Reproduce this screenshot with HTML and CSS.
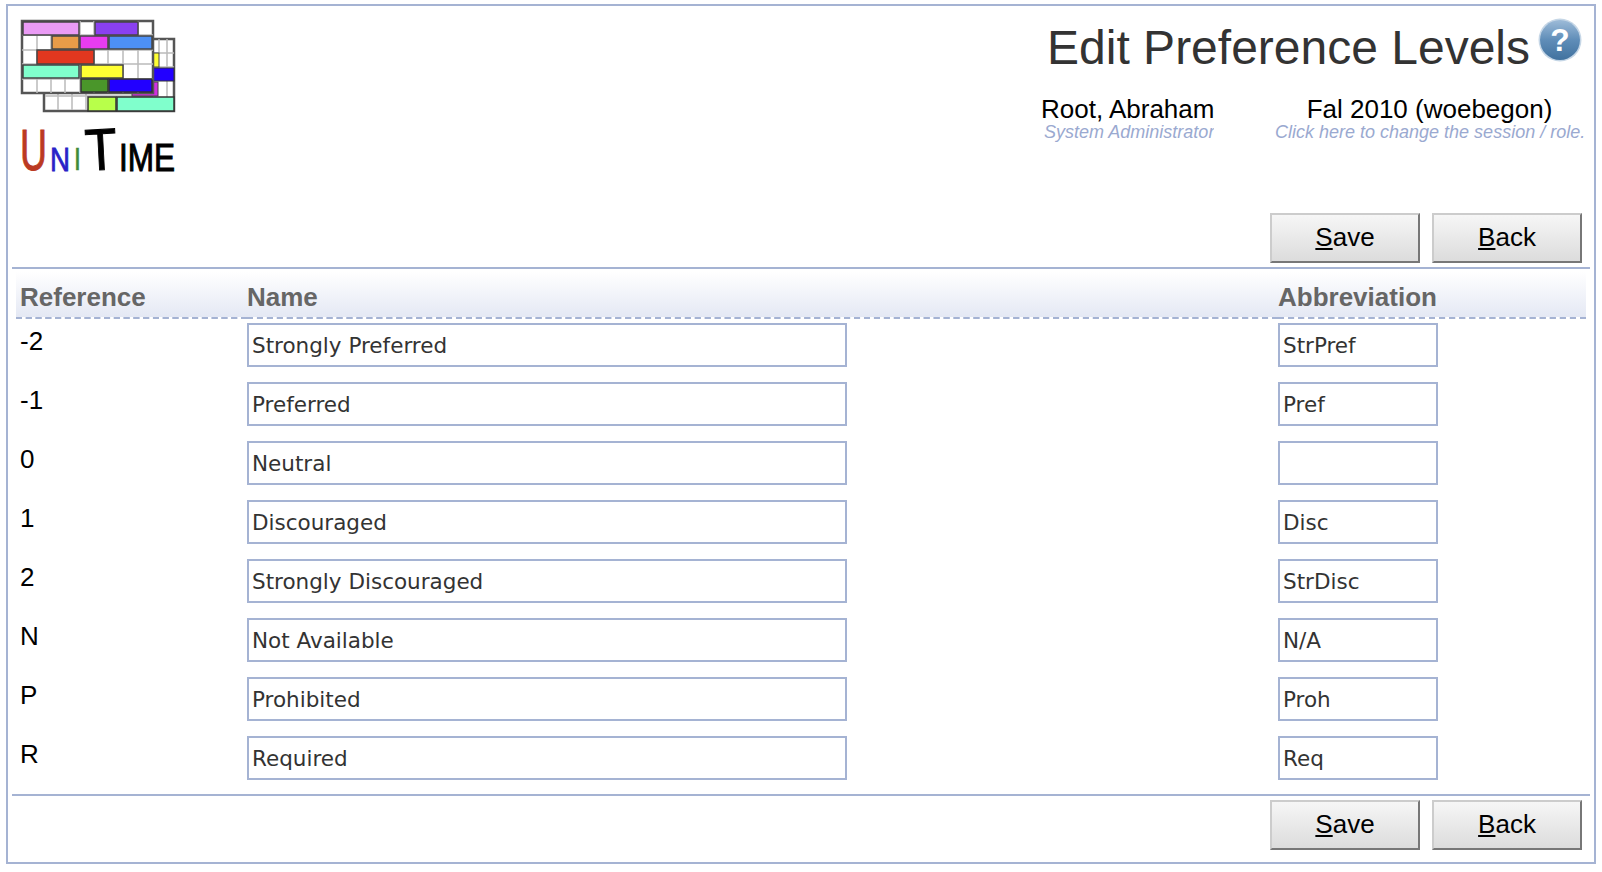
FILE: index.html
```html
<!DOCTYPE html>
<html lang="en">
<head>
<meta charset="utf-8">
<title>Edit Preference Levels</title>
<link rel="stylesheet" href="styles.css">
</head>
<body>
<div class="frame">
  <header class="top">
    <svg class="logo" width="160" height="165" viewBox="18 18 160 165" aria-label="UniTime">
      <g class="grid-back">
        <rect x="44" y="39" width="130" height="72" fill="#fff" stroke="#555" stroke-width="2.5"/>
        <path d="M58 94v16M72 94v16M86 94v16M159 39v14M167 39v58M153 53h21M153 67h21M153 96h-108" stroke="#bbb" stroke-width="1.5" fill="none"/>
        <rect x="153" y="53" width="6" height="14" fill="#ffff33" stroke="#444"/>
        <rect x="153" y="68" width="21" height="13" fill="#2200ff" stroke="#333"/>
        <rect x="132" y="82" width="26" height="14" fill="#d030e0" stroke="#444"/>
        <rect x="88" y="97" width="28" height="14" fill="#b8ff4a" stroke="#333" stroke-width="1.5"/>
        <rect x="117" y="97" width="57" height="14" fill="#80ffcc" stroke="#333" stroke-width="1.5"/>
      </g>
      <g class="grid-main">
        <rect x="22" y="21" width="131" height="72" fill="#fff" stroke="#555" stroke-width="2.5"/>
        <path d="M22 35h131M22 50h131M22 64h131M22 79h131M37 35v58M51 35v58M65 35v58M80 21v72M94 21v72M108 35v58M123 50v43M138 21v72" stroke="#bbb" stroke-width="1.5" fill="none"/>
        <rect x="23" y="22" width="56" height="13" fill="#ea9bf5" stroke="#444" stroke-width="1.5"/>
        <rect x="95" y="22" width="43" height="13" fill="#8a40f0" stroke="#444" stroke-width="1.5"/>
        <rect x="52" y="36" width="27" height="13" fill="#e89c48" stroke="#444" stroke-width="1.5"/>
        <rect x="80" y="36" width="28" height="13" fill="#e83cf0" stroke="#444" stroke-width="1.5"/>
        <rect x="109" y="36" width="43" height="13" fill="#4d90f5" stroke="#444" stroke-width="1.5"/>
        <rect x="37" y="50" width="57" height="14" fill="#e2371f" stroke="#444" stroke-width="1.5"/>
        <rect x="23" y="65" width="56" height="13" fill="#80ffcc" stroke="#444" stroke-width="1.5"/>
        <rect x="81" y="65" width="42" height="13" fill="#ffff33" stroke="#444" stroke-width="1.5"/>
        <rect x="81" y="79" width="27" height="13" fill="#4a962a" stroke="#333" stroke-width="1.5"/>
        <rect x="109" y="79" width="43" height="13" fill="#2200ff" stroke="#333" stroke-width="1.5"/>
      </g>
      <text class="lg lg-u" transform="translate(20 170) scale(.645 1)">U</text>
      <text class="lg lg-n" transform="translate(50 171) scale(.84 1)">N</text>
      <text class="lg lg-i" transform="translate(74 170) scale(.8 1)">I</text>
      <text class="lg lg-t" transform="rotate(-3 100 150) translate(85 170) scale(.89 1)">T</text>
      <text class="lg lg-ime" transform="translate(119 171) scale(.83 1)">IME</text>
    </svg>
    <div class="head-right">
      <div class="title-row">
        <h1 class="title">Edit Preference Levels</h1>
        <svg class="help" width="44" height="44" viewBox="0 0 43 43" aria-label="Help">
          <defs>
            <linearGradient id="helpfill" x1="0" y1="0" x2="0" y2="1">
              <stop offset="0" stop-color="#9dbbd8"/>
              <stop offset="0.5" stop-color="#5f8db8"/>
              <stop offset="1" stop-color="#41729f"/>
            </linearGradient>
          </defs>
          <circle cx="21.5" cy="21.5" r="21" fill="#c5d6e6"/>
          <circle cx="21.5" cy="21.5" r="19.5" fill="url(#helpfill)"/>
          <text class="help-mark" x="21.5" y="32" text-anchor="middle">?</text>
        </svg>
      </div>
      <div class="info-row">
        <div class="info info-user">
          <div class="info-main">Root, Abraham</div>
          <div class="info-sub">System Administrator</div>
        </div>
        <div class="info info-session">
          <div class="info-main">Fal 2010 (woebegon)</div>
          <div class="info-sub">Click here to change the session / role.</div>
        </div>
      </div>
    </div>
  </header>

  <div class="actions">
    <button class="btn" type="button"><u>S</u>ave</button>
    <button class="btn" type="button"><u>B</u>ack</button>
  </div>
  <div class="rule"></div>

  <table class="levels">
    <thead>
      <tr>
        <th class="col-ref">Reference</th>
        <th class="col-name">Name</th>
        <th class="col-abbr">Abbreviation</th>
      </tr>
    </thead>
    <tbody>
      <tr><td class="ref">-2</td><td><input class="field field-name" value="Strongly Preferred"></td><td><input class="field field-abbr" value="StrPref"></td></tr>
      <tr><td class="ref">-1</td><td><input class="field field-name" value="Preferred"></td><td><input class="field field-abbr" value="Pref"></td></tr>
      <tr><td class="ref">0</td><td><input class="field field-name" value="Neutral"></td><td><input class="field field-abbr" value=""></td></tr>
      <tr><td class="ref">1</td><td><input class="field field-name" value="Discouraged"></td><td><input class="field field-abbr" value="Disc"></td></tr>
      <tr><td class="ref">2</td><td><input class="field field-name" value="Strongly Discouraged"></td><td><input class="field field-abbr" value="StrDisc"></td></tr>
      <tr><td class="ref">N</td><td><input class="field field-name" value="Not Available"></td><td><input class="field field-abbr" value="N/A"></td></tr>
      <tr><td class="ref">P</td><td><input class="field field-name" value="Prohibited"></td><td><input class="field field-abbr" value="Proh"></td></tr>
      <tr><td class="ref">R</td><td><input class="field field-name" value="Required"></td><td><input class="field field-abbr" value="Req"></td></tr>
    </tbody>
  </table>

  <div class="rule rule-bottom"></div>
  <div class="actions actions-bottom">
    <button class="btn" type="button"><u>S</u>ave</button>
    <button class="btn" type="button"><u>B</u>ack</button>
  </div>
</div>
</body>
</html>
```

FILE: styles.css
```css
* { box-sizing: border-box; }

html, body { height: 100%; }

body {
  margin: 0;
  padding: 4px 6px;
  background: #fff;
  font-family: "Liberation Sans", Arial, sans-serif;
  color: #000;
  overflow: hidden;
}

.frame {
  width: 1590px;
  height: 860px;
  border: 2px solid #a5b3d3;
  padding: 0 4px 0 4px;
}

.top {
  display: flex;
  justify-content: space-between;
  height: 207px;
}

.logo {
  display: block;
  margin: 12px 0 0 6px;
  flex: none;
}

.grid-back, .grid-main { filter: blur(0.6px); }

.lg { font-family: "Liberation Sans", sans-serif; }
.lg-u { font-size: 58px; fill: #bb3a22; stroke: #bb3a22; stroke-width: 1; }
.lg-n { font-size: 33px; fill: #2a22c8; stroke: #2a22c8; stroke-width: 0.8; }
.lg-i { font-size: 31px; fill: #3f8a3a; stroke: #3f8a3a; stroke-width: 0.6; }
.lg-t { font-size: 59px; fill: #000; stroke: #000; stroke-width: 1; }
.lg-ime { font-size: 38px; fill: #000; stroke: #000; stroke-width: 1; }

.head-right {
  display: flex;
  flex-direction: column;
  align-items: flex-end;
  padding-top: 12px;
}

.title-row {
  display: flex;
  align-items: flex-start;
  gap: 8px;
  padding-right: 8px;
}

.title {
  margin: 1px 0 0;
  font-size: 48px;
  font-weight: normal;
  line-height: 58px;
  color: #333;
}

.help { display: block; flex: none; }

.help-mark {
  font-family: "Liberation Sans", sans-serif;
  font-size: 31px;
  font-weight: bold;
  fill: #fff;
}

.info-row {
  display: flex;
  gap: 61px;
  margin-top: 19px;
  padding-right: 6px;
}

.info {
  text-align: center;
  white-space: nowrap;
}

.info-user { width: 173px; }
.info-session { width: 309px; }

.info-main {
  font-size: 26px;
  line-height: 26px;
}

.info-sub {
  font-size: 18px;
  line-height: 20px;
  font-style: italic;
  color: #9aa9d0;
}

.info-user .info-sub {
  padding-left: 3px;
  text-align: left;
  overflow: hidden;
}

.actions {
  display: flex;
  justify-content: flex-end;
  gap: 12px;
  padding-right: 8px;
}

.btn {
  width: 150px;
  height: 50px;
  padding: 0 0 2px;
  border-width: 2px;
  border-style: solid;
  border-color: #ccc #777 #777 #ccc;
  border-radius: 0;
  background: linear-gradient(#f6f6f6, #dcdcdc);
  font-family: "Liberation Sans", Arial, sans-serif;
  font-size: 26px;
  color: #000;
}

.rule {
  height: 2px;
  margin: 4px 0 3px;
  background: #a5b3d3;
}

.levels {
  width: 1570px;
  margin-left: 4px;
  border-collapse: collapse;
  table-layout: fixed;
}

.levels th {
  height: 46px;
  padding: 0;
  text-align: left;
  vertical-align: bottom;
  font-size: 26px;
  line-height: 39px;
  color: #666;
  background: linear-gradient(#fff, #e4e8f4);
  border-bottom: 2px dashed #a5b3d3;
}

.col-ref { width: 231px; padding-left: 4px !important; }
.col-name { width: 1031px; }

.levels td {
  height: 59px;
  padding: 4px 0 11px;
  vertical-align: top;
}

.levels td.ref {
  padding-left: 4px;
  padding-top: 7px;
  font-size: 26px;
  line-height: 30px;
}

.field {
  display: block;
  height: 44px;
  padding: 0 3px;
  border: 2px solid #a5b3d3;
  border-radius: 0;
  outline: none;
  background: #fff;
  font-family: "DejaVu Sans", Verdana, sans-serif;
  font-size: 21.5px;
  color: #333;
}

.field-name { width: 600px; }
.field-abbr { width: 160px; }

.rule-bottom { margin: 3px 0 4px; }
```
